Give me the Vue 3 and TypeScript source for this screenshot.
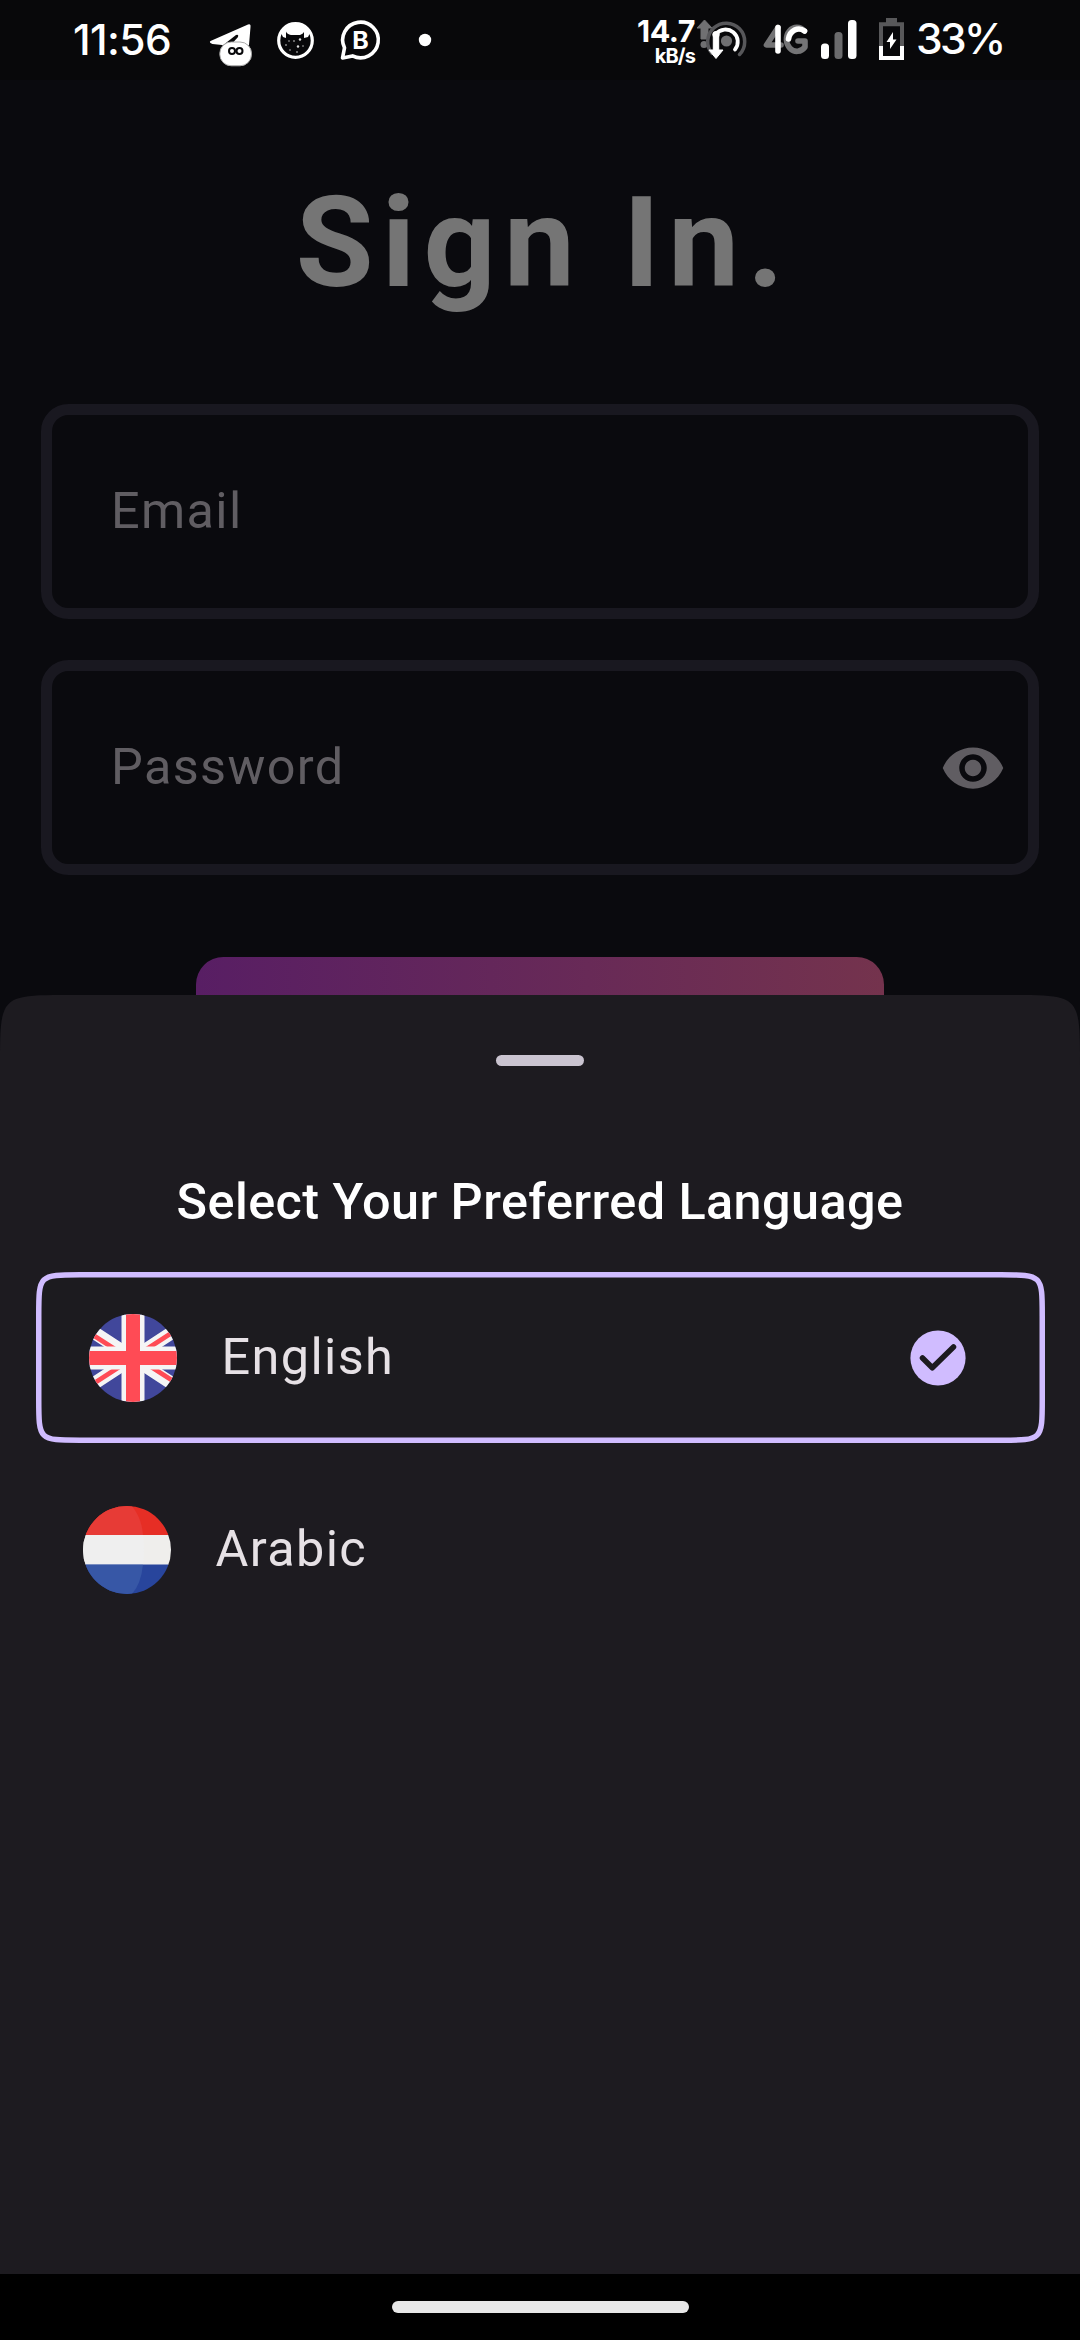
<script setup lang="ts">
import { ref } from 'vue'

interface Language {
  id: 'en' | 'ar'
  name: string
}

const languages: Language[] = [
  { id: 'en', name: 'English' },
  { id: 'ar', name: 'Arabic' },
]
const selected = ref<Language['id']>('en')
</script>

<template>
  <div class="screen">
    <header class="status">
      <span class="clock">11:56</span>
      <svg class="notifications" width="240" height="80" viewBox="200 0 240 80">
        <path d="M210.500 41 L248 24.500 Q251 23.500 250.500 27 L249 45 L222 45 L212.500 44 Q208.500 42.500 210.500 41Z" fill="#fff" />
        <path d="M222 46 L236 35 Q239 34 238 37 L230 46Z" fill="#08080a" />
        <rect x="219.800" y="42" width="31.700" height="23.800" rx="11.500" fill="#fff" stroke="#aaa" stroke-width="1" />
        <circle cx="232" cy="51" r="3" fill="none" stroke="#08080a" stroke-width="2" />
        <circle cx="239.500" cy="51" r="3" fill="none" stroke="#08080a" stroke-width="2" />
        <circle cx="295.500" cy="40.500" r="16.800" fill="#08080a" stroke="#fff" stroke-width="3.200" />
        <path d="M281 33 Q285 24 295.500 24 Q306 24 310 33 L308 37 L304 38 L304 32 Q303 34 300 35 L291 35 Q287 34 286 31.500 L286 38 L283 37Z" fill="#fff" />
        <g fill="#ddd">
          <circle cx="286" cy="45" r=".8" /><circle cx="294" cy="41" r=".8" />
          <circle cx="300" cy="39.500" r="1.200" /><circle cx="298" cy="46.500" r="1.200" />
          <circle cx="290" cy="50" r=".7" /><circle cx="303" cy="46" r=".7" />
          <circle cx="297" cy="52" r=".8" /><circle cx="289" cy="41" r=".7" />
        </g>
        <path d="M344.500 47.800 A17.800 17.800 0 1 1 352.500 55.900 L342.500 58 Z" fill="none" stroke="#fff" stroke-width="3.600" stroke-linejoin="round" />
        <text x="352.300" y="49.300" font-size="24.500" font-weight="700" fill="#fff" textLength="16.500" lengthAdjust="spacingAndGlyphs">B</text>
        <circle cx="425" cy="40" r="6.200" fill="#fff" />
      </svg>
      <div class="speed">
        <span class="rate">14.7</span>
        <span class="unit">kB/s</span>
      </div>
      <svg class="signals" width="210" height="80" viewBox="696 0 210 80">
        <g fill="#707072">
          <path d="M704.500 20 L712 28 H708 V39 H701 V28 H697Z" stroke="#707072" stroke-linejoin="round" />
          <circle cx="704" cy="44.500" r="3.500" />
          <circle cx="726.500" cy="41" r="5.600" />
        </g>
        <path d="M712 53.500 A18.500 18.500 0 1 1 739.500 54.500" fill="none" stroke="#57575a" stroke-width="3.500" stroke-linecap="round" />
        <path d="M716 34 A11.500 11.500 0 1 1 735 49.500" fill="none" stroke="#fff" stroke-width="3.800" stroke-linecap="round" />
        <circle cx="716" cy="34.500" r="3.600" fill="#fff" />
        <path d="M713.300 34 H718.700 V50 H723 L716 58.500 L709 50 H713.300Z" fill="#fff" stroke="#fff" stroke-linejoin="round" />
        <g fill="none" stroke="#747476" stroke-width="5.600" stroke-linecap="round" stroke-linejoin="round">
          <path d="M778 27.500 L766.500 45 H781" />
          <path d="M804.500 31 A10.500 12 0 1 0 805 47 V41 H798" />
          <path d="M778 27.500 V51" stroke="#fff" />
          <path d="M804.500 31 A10.500 12 0 0 0 788.500 39" stroke="#fff" />
        </g>
        <rect x="821" y="43.500" width="8" height="15.500" rx="3.500" fill="#fff" />
        <rect x="834.500" y="32" width="8" height="27" rx="3.500" fill="#6b6b6d" />
        <rect x="848" y="20" width="8.500" height="39" rx="3.500" fill="#fff" />
        <rect x="886" y="18" width="11" height="5" fill="#58585a" />
        <path d="M881 46 V24.300 H902 V46" fill="none" stroke="#58585a" stroke-width="4" />
        <path d="M881 46 V58 H902 V46" fill="none" stroke="#fff" stroke-width="4" />
        <path d="M893 32 L886.500 42 H890 V49 L896.500 39.500 H893Z" fill="#fff" />
      </svg>
      <span class="battery">33%</span>
    </header>

    <main class="form">
      <h1>Sign In.</h1>
      <div class="field"><span>Email</span></div>
      <div class="field">
        <span>Password</span>
        <svg width="66" height="66" viewBox="0 0 24 24" fill="#605d62">
          <path d="M12 4.500C7 4.500 2.730 7.610 1 12c1.730 4.390 6 7.500 11 7.500s9.270-3.110 11-7.500c-1.730-4.390-6-7.500-11-7.500zM12 17c-2.760 0-5-2.240-5-5s2.240-5 5-5 5 2.240 5 5-2.240 5-5 5zm0-8c-1.660 0-3 1.340-3 3s1.340 3 3 3 3-1.340 3-3-1.340-3-3-3z" />
        </svg>
      </div>
      <div class="submit"></div>
    </main>

    <section class="sheet">
      <div class="grabber"></div>
      <h2>Select Your Preferred Language</h2>
      <div
        v-for="lang in languages"
        :key="lang.id"
        class="option"
        :class="{ selected: lang.id === selected }"
        @click="selected = lang.id"
      >
        <svg v-if="lang.id === selected" class="outline" width="1009" height="171" viewBox="0 0 1009 171">
          <path d="M2.750 44 C2.750 2.750 2.750 2.750 44 2.750 H965 C1006.250 2.750 1006.250 2.750 1006.250 44 V127 C1006.250 168.250 1006.250 168.250 965 168.250 H44 C2.750 168.250 2.750 168.250 2.750 127Z" fill="#1c1b1f" stroke="#d0bcff" stroke-width="5.500" />
        </svg>
        <svg v-if="lang.id === 'en'" class="flag" width="88" height="88" viewBox="0 0 88 88">
          <defs><clipPath id="round-en"><circle cx="44" cy="44" r="44" /></clipPath></defs>
          <g clip-path="url(#round-en)">
            <rect width="88" height="88" fill="#41479b" />
            <path d="M-8 10 L96 78 M-8 78 L96 10" stroke="#f5f5f5" stroke-width="13" />
            <path d="M0 18.500 L28 36.500 M88 15.500 L54 37.500 M0 72.500 L34 50.500 M88 69.500 L60 51.500" stroke="#ff4b55" stroke-width="4.800" />
            <path d="M44 0 V88 M0 44 H88" stroke="#f5f5f5" stroke-width="23" />
            <path d="M44 0 V88 M0 44 H88" stroke="#ff4b55" stroke-width="14" />
          </g>
        </svg>
        <svg v-else class="flag" width="88" height="88" viewBox="0 0 88 88">
          <defs><clipPath id="round-ar"><circle cx="44" cy="44" r="44" /></clipPath></defs>
          <g clip-path="url(#round-ar)">
            <rect width="88" height="29" fill="#e62e25" />
            <rect y="29" width="88" height="30" fill="#efeeec" />
            <rect y="58.500" width="88" height="30" fill="#28459c" />
            <path d="M0 0 H49 Q59 13 60 29 H0Z" fill="#e73b36" />
            <path d="M0 29 H60 Q62 44 60 58.500 H0Z" fill="#efefef" />
            <path d="M0 58.500 H60 Q58 78 49 88 H0Z" fill="#3757a6" />
          </g>
        </svg>
        <span class="name">{{ lang.name }}</span>
        <svg v-if="lang.id === selected" class="check" width="56" height="56" viewBox="0 0 56 56">
          <circle cx="28" cy="28" r="27.600" fill="#d0bcff" />
          <path d="M12.500 28 L22.300 37.800 L43.500 17" fill="none" stroke="#1c1b1f" stroke-width="5.500" stroke-linecap="round" stroke-linejoin="round" />
        </svg>
      </div>
    </section>

    <footer class="nav"><div class="pill"></div></footer>
  </div>
</template>

<style>
body {
  margin: 0;
  background: #0a0a0e;
}
</style>

<style scoped>
.screen {
  display: flex;
  flex-direction: column;
  width: 1080px;
  height: 2340px;
  overflow: hidden;
  background: #0a0a0e;
  font-family: Roboto, 'Liberation Sans', sans-serif;
}
.status {
  display: flex;
  flex: none;
  height: 80px;
  background: #08080a;
  color: #fff;
  font-family: Inter, Roboto, sans-serif;
  white-space: nowrap;
}
.status svg {
  flex: none;
}
.clock {
  width: 127px;
  margin-left: 73px;
  font-size: 42.500px;
  line-height: 80px;
  font-weight: 500;
  letter-spacing: -0.600px;
}
.speed {
  display: flex;
  flex-direction: column;
  align-items: flex-end;
  width: 80px;
  margin-left: 175px;
  font-weight: 700;
}
.rate {
  margin-top: 16px;
  font-size: 30.500px;
  line-height: 30px;
  letter-spacing: -0.500px;
}
.unit {
  font-size: 20px;
  line-height: 20px;
  letter-spacing: -0.900px;
}
.signals {
  margin-left: 1px;
}
.battery {
  margin-left: 10px;
  font-size: 42.500px;
  line-height: 77px;
  font-weight: 500;
  letter-spacing: -2.700px;
}
.form {
  display: flex;
  flex-direction: column;
  flex: none;
  height: 915px;
  padding: 0 41px;
  overflow: hidden;
}
h1 {
  margin: 89px 0 87px;
  padding-left: 8px;
  color: #757575;
  font-size: 126.500px;
  line-height: 148px;
  font-weight: 700;
  letter-spacing: 8.250px;
  text-align: center;
}
.field {
  box-sizing: border-box;
  display: flex;
  flex: none;
  align-items: center;
  justify-content: space-between;
  height: 215px;
  margin-bottom: 41px;
  padding: 0 22px 0 59px;
  border: 11px solid #191820;
  border-radius: 27.500px;
  color: #605d62;
  font-size: 50.400px;
  letter-spacing: 1.375px;
}
.field span {
  padding-bottom: 2px;
}
.submit {
  flex: none;
  width: 688px;
  height: 120px;
  margin: 41px auto 0;
  border-radius: 27.500px;
  background: linear-gradient(90deg, #581e64, #74334d);
}
.sheet {
  display: flex;
  flex-direction: column;
  flex: none;
  height: 1279px;
  background: #1d1b20;
  clip-path: path('M0 70 C0 0 0 0 70 0 H1010 C1080 0 1080 0 1080 70 V1279 H0Z');
}
.grabber {
  width: 88px;
  height: 11px;
  margin: 60px auto 0;
  border-radius: 5.500px;
  background: #cac4d0;
}
h2 {
  margin: 104px 0 38px;
  color: #fff;
  font-size: 50.400px;
  line-height: 64px;
  font-weight: 500;
  letter-spacing: 0.410px;
  text-align: center;
}
.option {
  position: relative;
  display: flex;
  align-items: center;
  height: 171px;
  margin: 0 36px 21px;
  padding: 0 78px 0 47px;
  color: #e6e1e5;
  font-size: 50.400px;
  letter-spacing: 1.375px;
}
.option.selected {
  padding-left: 53px;
}
.outline {
  position: absolute;
  inset: 0;
}
.flag,
.check,
.name {
  position: relative;
}
.name {
  flex: 1;
  margin-left: 44.500px;
  padding-bottom: 2px;
}
.nav {
  display: flex;
  flex: 1;
  align-items: center;
  justify-content: center;
  background: #000;
}
.pill {
  width: 297px;
  height: 12px;
  border-radius: 6px;
  background: #e8e8e8;
}
</style>
